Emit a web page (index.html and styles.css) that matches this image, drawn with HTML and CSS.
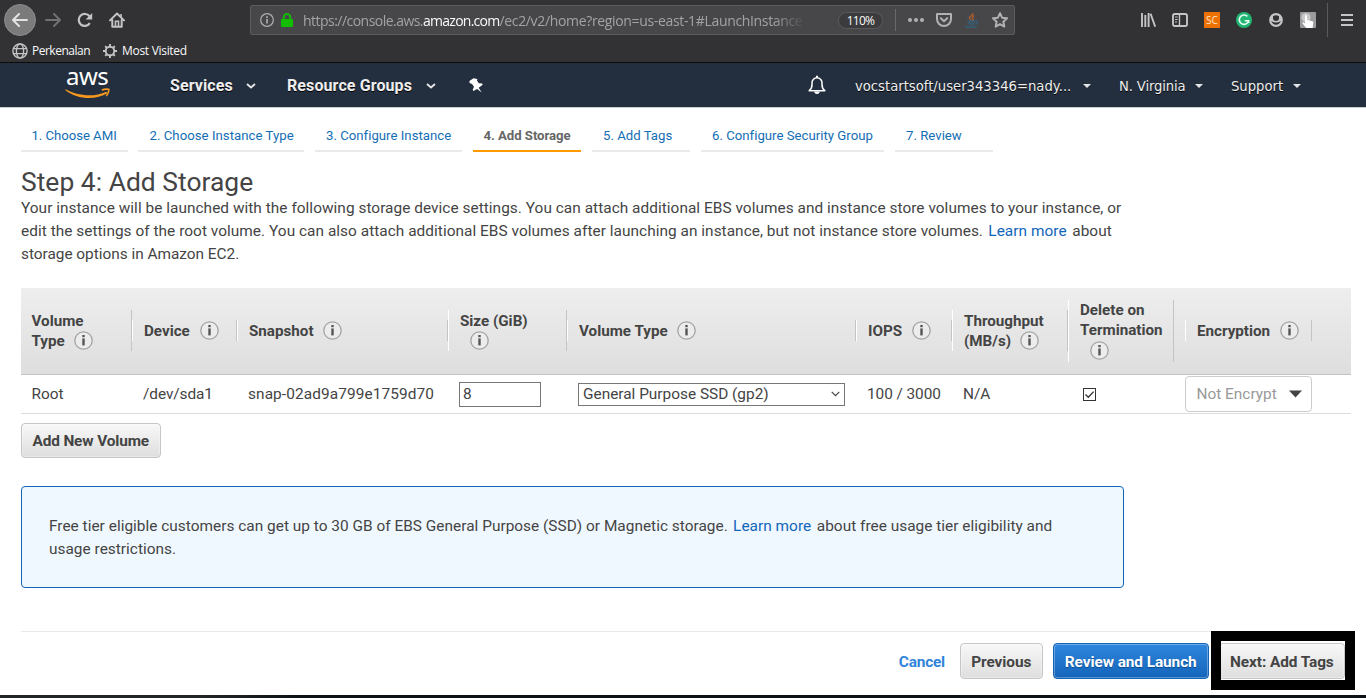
FILE: index.html
```html
<!DOCTYPE html>
<html lang="en">
<head>
<meta charset="utf-8">
<title>Launch instance wizard | EC2 Management Console</title>
<link rel="stylesheet" href="styles.css">
</head>
<body>
<svg class="defs" width="0" height="0">
  <symbol id="info" viewBox="0 0 19 19">
    <circle cx="9.5" cy="9.5" r="8.7" fill="#ececec" stroke="#a3a3a3" stroke-width="1.3"/>
    <rect x="8.3" y="4" width="2.4" height="2.2" fill="#555"/>
    <rect x="8.3" y="7.4" width="2.4" height="7" fill="#555"/>
  </symbol>
</svg>

<header class="browser">
  <div class="toolbar">
    <div class="back"><svg width="16" height="16" viewBox="0 0 16 16" fill="none" stroke="#e3e3e4" stroke-width="2" stroke-linecap="round" stroke-linejoin="round"><path d="M15 8H1.5M7 2L1 8l6 6"/></svg></div>
    <svg class="fwd" width="16" height="16" viewBox="0 0 16 16" fill="none" stroke="#727274" stroke-width="1.8" stroke-linecap="round" stroke-linejoin="round"><path d="M1 8h13.5M9 2l6 6-6 6"/></svg>
    <svg class="tool" width="16" height="16" viewBox="0 0 16 16"><path d="M12.8 11.2A6 6 0 1 1 12.6 4.4" fill="none" stroke="#c4c4c5" stroke-width="2.2"/><path d="M15.2 1v6.6H8.6z" fill="#c4c4c5"/></svg>
    <svg class="tool" width="16" height="16" viewBox="0 0 16 16"><path d="M1 8.4L8 1.5l7 6.9M3.3 8v6.8h9.4V8" fill="none" stroke="#c4c4c5" stroke-width="2" stroke-linejoin="round" stroke-linecap="round"/><path d="M6.5 15V9.2h3V15M12 2v3" stroke="#c4c4c5" fill="none" stroke-width="1.6"/></svg>
    <div class="urlbar">
      <svg class="site-info" width="14" height="14" viewBox="0 0 14 14"><circle cx="7" cy="7" r="6.3" fill="none" stroke="#b1b1b3" stroke-width="1.2"/><path d="M7 3.2v1.7M7 6v4.6" stroke="#b1b1b3" stroke-width="1.6"/></svg>
      <svg class="lock" width="12" height="14" viewBox="0 0 12 14"><rect y="6" width="12" height="8" rx="1" fill="#12bc00"/><path d="M2.8 6.5V4.2a3.2 3.2 0 0 1 6.4 0v2.3" fill="none" stroke="#12bc00" stroke-width="2"/></svg>
      <div class="url"><span class="u1">https://console.aws.</span><span class="u2">amazon.com</span><span class="u3">/ec2/v2/home?region=us-east-1#LaunchInstance</span></div>
      <div class="zoom">110%</div>
      <div class="url-sep"></div>
      <svg class="act" width="16" height="16" viewBox="0 0 16 16" fill="#b1b1b3"><circle cx="2" cy="8" r="2"/><circle cx="8" cy="8" r="2"/><circle cx="14" cy="8" r="2"/></svg>
      <svg class="act" width="16" height="16" viewBox="0 0 16 16" fill="none" stroke="#b1b1b3" stroke-width="2" stroke-linejoin="round" stroke-linecap="round"><path d="M1 2h14v5a7 7 0 0 1-14 0zM4.8 6.2L8 9.2l3.2-3"/></svg>
      <svg class="act" width="16" height="16" viewBox="0 0 16 16" fill="none" stroke-width="1.2"><path d="M9 1Q9 3 6.5 4.3T7.3 8M10.2 3.6Q7.4 5 8.8 6.6T8.3 8.6" stroke="#b8622d"/><path d="M3 9.2h8.2M4 11.2h6.4M4.8 13h5M1 14.7q6 1.6 12 0M11.3 9.2q3-.2 2 1.6-.7 1-2.2 1.2" stroke="#34627c"/></svg>
      <svg class="act" width="16" height="16" viewBox="0 0 16 16" fill="none" stroke="#b1b1b3" stroke-width="2" stroke-linejoin="round"><path d="M8 1.2l2.1 4.5 4.9.6-3.6 3.4.9 4.9L8 12.2l-4.3 2.4.9-4.9L1 6.3l4.9-.6z"/></svg>
    </div>
    <div class="ext">
      <svg width="16" height="16" viewBox="0 0 16 16" stroke="#c4c4c5" stroke-width="1.9"><path d="M2 1v14M5.3 3v12M8.6 1v14M10.6 1.8l4.6 13"/></svg>
      <svg width="16" height="16" viewBox="0 0 16 16" fill="none" stroke="#c4c4c5"><rect x="1" y="2" width="14" height="12" rx="1.8" stroke-width="1.9"/><path d="M7.5 2v12" stroke-width="1.4"/><path d="M3 5h2.7M3 7.5h2.7M3 10h2"/></svg>
      <span class="sc">SC</span>
      <svg width="16" height="16" viewBox="0 0 16 16"><circle cx="8" cy="8" r="8" fill="#21b573"/><path d="M11.4 4.4A4.7 4.7 0 1 0 12.6 8.7H8.7M12.6 8.7V11" fill="none" stroke="#e9fff5" stroke-width="1.6"/></svg>
      <svg width="16" height="16" viewBox="0 0 16 16"><circle cx="8" cy="8" r="6.9" fill="#c4c4c5"/><path d="M5 4.300Q8 2.300 11 4.300V7Q10.500 9 8 9T5 7z" fill="#323234"/><path d="M3.200 9Q8 12 12.800 9 11.500 12.700 8 12.700T3.200 9z" fill="#323234"/></svg>
      <svg width="16" height="16" viewBox="0 0 16 16"><rect width="16" height="16" rx="1" fill="#9b9b9b"/><circle cx="6" cy="5.6" r="4.6" fill="#c9c9c9"/><path d="M5 3.5q1.6-1 2 .5v4l5.5 1.3q1 .4.8 1.700L12.600 16H6.200l-4-5q.4-1.500 2.800.3z" fill="#fff"/></svg>
    </div>
    <div class="menu-sep"></div>
    <svg class="menu" width="12" height="12" viewBox="0 0 12 12" fill="#c4c4c5"><rect width="12" height="2"/><rect y="5" width="12" height="2"/><rect y="10" width="12" height="2"/></svg>
  </div>
  <div class="bookmarks">
    <svg width="16" height="16" viewBox="0 0 16 16" fill="none" stroke="#c4c4c5" stroke-width="1.4"><circle cx="8" cy="8" r="7.1"/><ellipse cx="8" cy="8" rx="3.6" ry="7.1"/><path d="M1 5.6h14M1 10.6h14"/></svg>
    <span class="bm1">Perkenalan</span>
    <svg width="16" height="16" viewBox="0 0 16 16" fill="none" stroke="#c4c4c5"><circle cx="8" cy="8" r="4.3" stroke-width="1.9"/><path d="M8 1v2.6M8 12.4V15M1 8h2.6M12.4 8H15M3.2 3.2L5 5M11 11l1.8 1.8M3.2 12.8L5 11M11 5l1.8-1.8" stroke-width="1.9"/></svg>
    <span class="bm2">Most Visited</span>
  </div>
</header>

<nav class="aws">
  <div class="logo"><span>aws</span><svg width="46" height="12" viewBox="0 0 46 12"><path d="M.5 1.3C12 8 29 9.5 41.500 3.700L42.500 5.300C30 12.500 12 11.500.2 2z" fill="#f7981f"/><path d="M36.800 1.900Q40 .7 43.800 1.300Q44.200 4.500 41.300 8" fill="none" stroke="#f7981f" stroke-width="1.600"/></svg></div>
  <span class="nav-b services">Services</span>
  <svg class="chev" width="10" height="6" viewBox="0 0 10 6"><path d="M1 1l4 3.400L9 1" fill="none" stroke="#e6e6e6" stroke-width="1.900"/></svg>
  <span class="nav-b groups">Resource Groups</span>
  <svg class="chev" width="10" height="6" viewBox="0 0 10 6"><path d="M1 1l4 3.400L9 1" fill="none" stroke="#e6e6e6" stroke-width="1.900"/></svg>
  <svg class="pin" width="14" height="15" viewBox="0 0 14 15"><path d="M4.500.3L8.300 1 8 2.600l1.800 2.700 3.300.3.600 1.200-4 2.900 3 4.800L8.200 11l-3.900 2-.6-1.200 1.300-3L3 5.900.600 5 .4 3z" fill="#fff"/></svg>
  <svg class="bell" width="18" height="20" viewBox="0 0 18 20"><path d="M1.200 15.700h15.600Q14 13.500 14 9.500V7.700a5 5 0 0 0-10 0v1.800q0 4-2.800 6.200z" fill="none" stroke="#fff" stroke-width="1.500" stroke-linejoin="round"/><path d="M9 .8v2" stroke="#fff" stroke-width="2"/><path d="M6.300 16.500h5.400a2.700 2.400 0 0 1-5.400 0z" fill="#fff"/></svg>
  <span class="nav-r user">vocstartsoft/user343346=nady...</span><i class="tri"></i>
  <span class="nav-r region">N. Virginia</span><i class="tri"></i>
  <span class="nav-r support">Support</span><i class="tri"></i>
</nav>

<main>
  <ol class="steps">
    <li>1. Choose AMI</li><li class="wide">2. Choose Instance Type</li><li>3. Configure Instance</li><li class="on">4. Add Storage</li><li>5. Add Tags</li><li>6. Configure Security Group</li><li>7. Review</li>
  </ol>
  <h1>Step 4: Add Storage</h1>
  <p class="intro">Your instance will be launched with the following storage device settings. You can attach additional EBS volumes and instance store volumes to your instance, or<br>edit the settings of the root volume. You can also attach additional EBS volumes after launching an instance, but not instance store volumes. <a>Learn more</a> about<br><span class="tight">storage options in Amazon EC2.</span></p>

  <section class="volumes">
    <div class="row head">
      <div class="th first two">Volume<br>Type <svg class="i"><use href="#info"/></svg></div>
      <div class="th">Device <svg class="i"><use href="#info"/></svg></div>
      <div class="th">Snapshot <svg class="i"><use href="#info"/></svg></div>
      <div class="th two own-line">Size (GiB)<br><svg class="i"><use href="#info"/></svg></div>
      <div class="th">Volume Type <svg class="i"><use href="#info"/></svg></div>
      <div class="th">IOPS <svg class="i"><use href="#info"/></svg></div>
      <div class="th two">Throughput<br>(MB/s) <svg class="i"><use href="#info"/></svg></div>
      <div class="th three own-line">Delete on<br>Termination<br><svg class="i"><use href="#info"/></svg></div>
      <div class="th enc">Encryption <svg class="i"><use href="#info"/></svg></div>
    </div>
    <div class="row body">
      <div class="td first">Root</div>
      <div class="td dev">/dev/sda1</div>
      <div class="td snap">snap-02ad9a799e1759d70</div>
      <div class="td"><div class="size">8</div></div>
      <div class="td"><div class="select">General Purpose SSD (gp2)<svg width="9" height="6" viewBox="0 0 9 6"><path d="M.7.9l3.800 3.800L8.300.9" fill="none" stroke="#444" stroke-width="1.200"/></svg></div></div>
      <div class="td dev">100 / 3000</div>
      <div class="td dev">N/A</div>
      <div class="td check"><svg width="13" height="13" viewBox="0 0 13 13"><rect x=".5" y=".5" width="12" height="12" fill="#fff" stroke="#333"/><path d="M2.500 6.500l2.800 2.800L10.600 3.600" fill="none" stroke="#333" stroke-width="1.300"/></svg></div>
      <div class="td enc"><div class="combo">Not Encrypt<svg width="13" height="8" viewBox="0 0 13 8"><path d="M0 .5h13L6.500 7.500z" fill="#444"/></svg></div></div>
    </div>
  </section>

  <div class="btn add">Add New Volume</div>

  <section class="notice">Free tier eligible customers can get up to 30 GB of EBS General Purpose (SSD) or Magnetic storage. <a>Learn more</a> about free usage tier eligibility and<br>usage restrictions.</section>

  <footer>
    <a class="cancel">Cancel</a>
    <div class="btn prev">Previous</div>
    <div class="btn primary">Review and Launch</div>
    <div class="btn next">Next: Add Tags</div>
  </footer>
</main>
<div class="highlight"></div>
<div class="taskbar"></div>
</body>
</html>
```
FILE: styles.css
```css
* { box-sizing: border-box; }
body { margin: 0; width: 1366px; height: 698px; overflow: hidden; position: relative; background: #fff; color: #444; font-family: Roboto, "Liberation Sans", sans-serif; font-size: 15.4px; }
.defs { position: absolute; }
svg { display: block; flex: none; }
span, .btn, .cancel { white-space: nowrap; }

.browser { height: 63px; background: #323234; border-bottom: 1px solid #0c0c0d; font-family: "Open Sans", sans-serif; }
.toolbar { display: flex; align-items: center; height: 40px; padding-left: 4px; }
.back { width: 32px; height: 32px; border-radius: 50%; background: #7b7b7c; border: 1px solid #8b8b8c; display: flex; align-items: center; justify-content: center; }
.fwd { margin-left: 9px; }
.tool { margin-left: 16px; }
.urlbar { margin-left: 125px; width: 765px; height: 30px; background: #474749; border: 1px solid #5c5c5e; border-radius: 2px; display: flex; align-items: center; padding-left: 9px; }
.lock { margin-left: 7px; margin-top: -1px; }
.url { margin-left: 10px; margin-top: 2px; width: 504px; overflow: hidden; white-space: nowrap; font-size: 14px; line-height: 20px; color: #a3a3a5; display: flex; -webkit-mask-image: linear-gradient(90deg, #000 470px, transparent 503px); mask-image: linear-gradient(90deg, #000 470px, transparent 503px); }
.u1 { letter-spacing: -.53px; }
.u2 { letter-spacing: -.74px; color: #f9f9fa; }
.u3 { letter-spacing: -.34px; }
.zoom { margin-left: 31px; width: 45px; height: 17px; border: 1px solid #5a5a5c; border-radius: 9px; background: #3b3b3d; color: #f9f9fa; font-size: 12px; line-height: 15px; letter-spacing: -.7px; text-align: center; }
.url-sep { width: 1px; height: 22px; background: #68686a; margin: 0 12px 0 12px; }
.act + .act { margin-left: 12px; }
.ext { display: flex; gap: 16px; margin-left: 125px; }
.sc { width: 16px; height: 16px; background: #ed7203; color: #ffe5c8; font-size: 10px; line-height: 16px; text-align: center; }
.menu-sep { width: 1px; height: 34px; background: #5a5a5c; margin-left: 11px; }
.menu { margin-left: 13px; }
.bookmarks { display: flex; align-items: center; height: 21px; padding-left: 12px; color: #f9f9fa; font-size: 12px; line-height: 20px; }
.bm1 { margin-left: 4px; width: 70px; letter-spacing: -.5px; }
.bm2 { margin-left: 4px; letter-spacing: -.3px; }

.aws { height: 45px; background: #232f3e; border-bottom: 1px solid #c9ced6; display: flex; align-items: center; padding-left: 65px; color: #fff; }
.logo { width: 46px; height: 36px; margin-top: -7px; display: flex; flex-direction: column; }
.logo span { font: 24px/24px "Noto Sans", sans-serif; letter-spacing: -.5px; height: 24px; padding-left: 1px; }
.nav-b { font-weight: bold; font-size: 16px; line-height: 20px; letter-spacing: .1px; color: #eee; text-shadow: 0 1px 0 #000; padding-top: 2px; }
.services { margin-left: 59px; width: 76px; }
.groups { margin-left: 31px; width: 139px; }
.chev { margin-top: 2px; }
.pin { margin-left: 33px; }
.bell { margin-left: 325px; }
.nav-r { font: 13.2px/18px "DejaVu Sans", sans-serif; color: #eee; text-shadow: 0 1px 0 #000; padding-top: 4px; }
.user { margin-left: 29px; width: 228px; }
.region { margin-left: 28px; width: 76px; letter-spacing: -.15px; }
.support { margin-left: 28px; width: 62px; }
.tri { border: 4px solid transparent; border-top-color: #e6e6e6; border-bottom: 0; margin-top: 1px; }

main { padding: 17px 15px 0 21px; }
.steps { list-style: none; margin: 0; padding: 0; display: grid; grid-template-columns: 106px 166px 147px 108px 98px 183px 98px; column-gap: 11px; font-size: 13.2px; color: #146eb4; letter-spacing: .01px; }
.steps li { height: 27px; line-height: 21px; padding-left: 11px; border-bottom: 2px solid #eaeaea; white-space: nowrap; }
.steps li:first-child { width: 107px; padding-left: 10.5px; letter-spacing: -.05px; }
.steps .wide { padding-left: 11.5px; letter-spacing: .03px; }
.steps .on { padding-left: 10.5px; border-color: #f90; color: #666; font-weight: bold; letter-spacing: -.05px; }
h1 { margin: 15px 0 0; font-weight: normal; font-size: 26.4px; line-height: 30px; letter-spacing: .03px; }
.intro { margin: 0; line-height: 23px; letter-spacing: .039px; white-space: nowrap; }
.intro a, .notice a { color: #1166bb; margin: 0 1.8px 0 1.5px; }
.tight { letter-spacing: -.02px; }

.volumes { margin-top: 22px; }
.row { display: grid; grid-template-columns: 111px 105px 211px 119px 289px 96px 116px 106px 11px 127px; align-items: center; }
.head { height: 87px; padding-bottom: 1px; background: linear-gradient(#eee, #dedede); border-bottom: 1px solid #c4c4c4; font-weight: bold; font-size: 15.2px; line-height: 20.4px; }
.th { border-left: 1px solid #fff; border-right: 1px solid #c4c4c4; padding: .5px 0 0 11px; height: 21px; white-space: nowrap; }
.th.first { border-left: 0; }
.two { height: 41px; }
.three { height: 62px; }
.enc { grid-column: 10; }
.i { display: inline-block; width: 19px; height: 19px; margin-left: 6px; vertical-align: -4.5px; }
.two .i { margin-left: 5px; }
.own-line .i { margin-left: 9.5px; }
.body { height: 39px; border-bottom: 1px solid #dcdcdc; }
.td { padding-left: 11px; white-space: nowrap; }
.th.first, .td.first { padding-left: 10.5px; }
.dev { letter-spacing: -.07px; }
.snap { letter-spacing: .1px; }
.size { width: 82px; height: 25px; border: 1px solid #777; padding-left: 3px; line-height: 23px; }
.select { width: 267px; height: 23px; border: 1px solid #777; padding: 0 4px; display: flex; align-items: center; justify-content: space-between; }
.check { padding-left: 15px; }
.td.enc { padding-left: 0; }
.combo { width: 127px; height: 36px; border: 1px solid #ccc; border-radius: 4px; color: #999; display: flex; align-items: center; justify-content: space-between; padding: 0 9px 0 10.5px; }

.btn { height: 36px; line-height: 36px; padding: 0 10.5px 0 10px; border: 1px solid #c6c6c6; border-radius: 4px; background: linear-gradient(#f8f8f8, #dedede); box-shadow: inset 0 0 0 1px rgba(255,255,255,.3); font-weight: bold; letter-spacing: -.08px; text-align: center; }
.add { width: 140px; height: 35px; line-height: 34px; margin-top: 9px; letter-spacing: -.14px; }
.notice { width: 1103px; height: 102px; margin-top: 28px; padding: 28px 27px; border: 1px solid #1166bb; border-radius: 4px; background: #f0f8ff; line-height: 23px; letter-spacing: .02px; white-space: nowrap; }
footer { margin-top: 43px; padding: 11px 6px 0 0; border-top: 1px solid #eaeaea; display: flex; justify-content: flex-end; align-items: center; gap: 10px; }
.cancel { color: #3184da; font-weight: bold; letter-spacing: -.2px; margin-right: 5px; padding-top: 1px; }
.prev { width: 83px; }
.primary { width: 156px; color: #fff; border-color: #1662b5; background: linear-gradient(#2f86dd, #1465ba); text-shadow: 0 1px 1px #0b4a8c; }
.next { width: 126px; }
.highlight { position: absolute; left: 1211px; top: 631px; width: 144px; height: 59px; border: 10px solid #000; }
.taskbar { position: absolute; left: 0; top: 695px; width: 1366px; height: 3px; background: linear-gradient(90deg, #232627 200px, #0c1216 300px); }
```
